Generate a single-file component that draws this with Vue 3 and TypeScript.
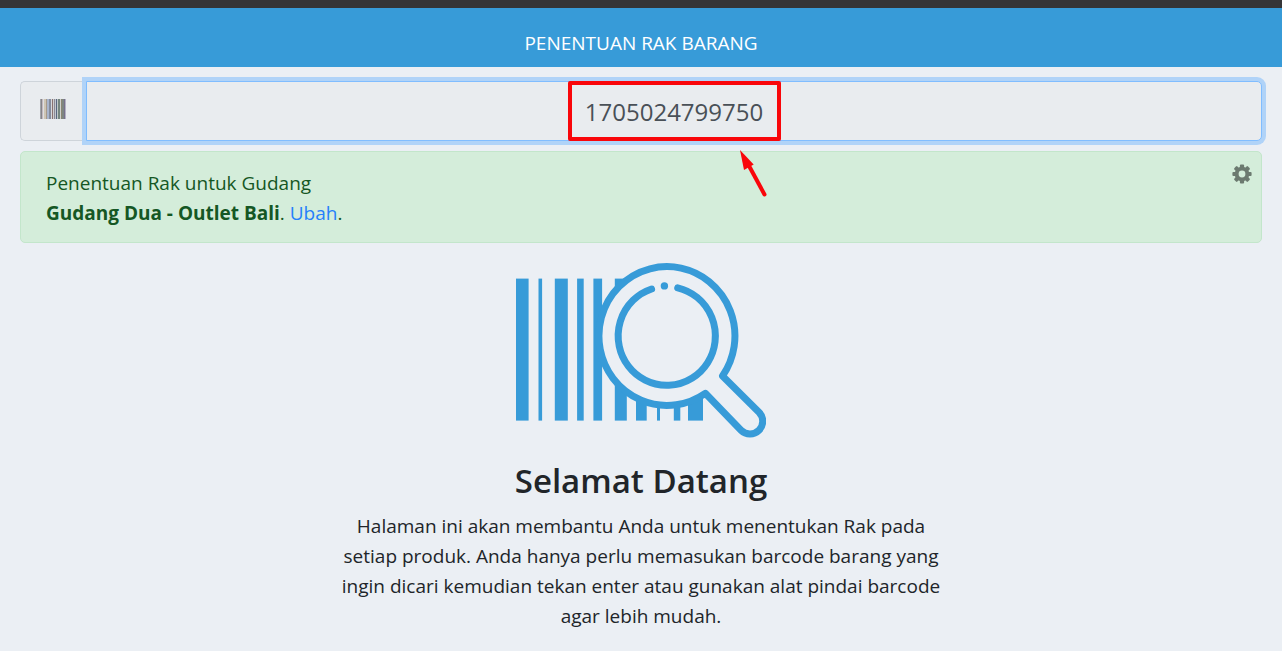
<script setup lang="ts">
import { ref } from 'vue'

const barcode = ref('1705024799750')
const warehouse = 'Gudang Dua - Outlet Bali'

interface Bar { x: number; w: number }
const bars: Bar[] = [
  { x: 0, w: 12.6 },
  { x: 22.5, w: 3.6 },
  { x: 38.8, w: 13 },
  { x: 61.1, w: 6.6 },
  { x: 77.4, w: 8.7 },
  { x: 98.8, w: 12 },
  { x: 120, w: 10.7 },
  { x: 141, w: 3 },
  { x: 157.8, w: 6.5 },
  { x: 172, w: 15 },
]

interface Stripe extends Bar { c: string }
const stripes: Stripe[] = [
  { x: 0, w: 1, c: '#a3a3a8' },
  { x: 1, w: 1, c: '#85858c' },
  { x: 2, w: 1, c: '#c4b9bd' },
  { x: 3, w: 1, c: '#dcdfe2' },
  { x: 4, w: 2, c: '#cfc5b4' },
  { x: 6, w: 1, c: '#a59a8c' },
  { x: 7, w: 2, c: '#a9b5cc' },
  { x: 9, w: 2, c: '#858c9c' },
  { x: 11, w: 1, c: '#d6d8dc' },
  { x: 12, w: 1, c: '#8a7270' },
  { x: 13, w: 1, c: '#cdd0d2' },
  { x: 14, w: 1, c: '#8d8a96' },
  { x: 15, w: 1, c: '#c3c8cf' },
  { x: 16, w: 1, c: '#59667f' },
  { x: 17, w: 1, c: '#c0c8c8' },
  { x: 18, w: 2, c: '#75867f' },
  { x: 20, w: 1, c: '#cfd2d0' },
  { x: 21, w: 1, c: '#8b8672' },
  { x: 22, w: 2, c: '#7d8682' },
  { x: 24, w: 1, c: '#77708c' },
  { x: 25, w: 1, c: '#b3b1c2' },
]
</script>

<template>
  <div class="page">
    <div class="strip"></div>
    <header class="topbar">
      <h1>PENENTUAN RAK BARANG</h1>
    </header>
    <main class="content">
      <div class="input-group">
        <label class="addon" for="barcode" aria-label="Barcode">
          <svg width="26" height="20" viewBox="0 0 26 20" shape-rendering="crispEdges" aria-hidden="true">
            <rect v-for="s in stripes" :key="s.x" :x="s.x" y="0" :width="s.w" height="20" :fill="s.c" />
          </svg>
        </label>
        <div class="field">
          <input id="barcode" v-model="barcode" type="text" autocomplete="off" />
          <div class="highlight">
            <svg class="arrow" width="32" height="50" viewBox="0 0 32 50" aria-hidden="true">
              <path d="M11 14 L27.5 44.5" stroke="#f9060a" stroke-width="4" stroke-linecap="round" />
              <path d="M3 0 L16.7 14.5 L7 20 Z" fill="#f9060a" />
            </svg>
          </div>
        </div>
      </div>

      <section class="notice">
        <p>
          Penentuan Rak untuk Gudang<br />
          <strong>{{ warehouse }}</strong>. <a href="#">Ubah</a>.
        </p>
        <button type="button" class="gear" aria-label="Pengaturan">
          <svg width="20" height="20" viewBox="0 0 20 20" aria-hidden="true">
            <g fill="#6c7a70">
              <rect v-for="a in [0, 45, 90, 135]" :key="a" x="7.9" y="0.4" width="4.2" height="19.2" rx="1" :transform="`rotate(${a} 10 10)`" />
              <circle cx="10" cy="10" r="7.3" />
            </g>
            <circle cx="10" cy="10" r="3.4" fill="#d4edda" />
          </svg>
        </button>
      </section>

      <section class="welcome">
        <svg width="250" height="175" viewBox="0 0 250 175" aria-hidden="true">
          <rect v-for="b in bars" :key="b.x" :x="b.x" y="15.6" :width="b.w" height="142" fill="#379bd8" />
          <g stroke="#379bd8" stroke-width="7" stroke-linejoin="round" stroke-linecap="round">
            <path
              fill="#ebeff4"
              d="M206.5 113 A68 69.4 0 1 0 189.3 130.3 L225 167.2 A12.7 12.7 0 0 0 243 149.2 Z"
            />
            <path fill="none" d="M135.6 26 A48.6 49.4 0 1 0 161.7 24.8" />
          </g>
          <circle cx="148.4" cy="22.9" r="3.7" fill="#379bd8" />
        </svg>
        <h2>Selamat Datang</h2>
        <p>
          Halaman ini akan membantu Anda untuk menentukan Rak pada setiap produk. Anda hanya perlu
          memasukan barcode barang yang ingin dicari kemudian tekan enter atau gunakan alat pindai
          barcode agar lebih mudah.
        </p>
      </section>
    </main>
  </div>
</template>

<style>
body {
  margin: 0;
  background: #ebeff4;
}
</style>

<style scoped>
.page {
  font-family: "Segoe UI", "Open Sans", "Noto Sans", sans-serif;
  font-size: 19px;
  line-height: 30px;
  color: #212529;
}
.page * {
  box-sizing: border-box;
}
.strip {
  height: 8px;
  background: #353537;
}
.topbar {
  padding: 20px 20px 9px;
  background: #379bd8;
  text-align: center;
}
h1 {
  margin: 0;
  font-size: 19px;
  font-weight: 400;
  color: #fff;
}
.content {
  padding: 14px 20px 0;
}
.input-group {
  display: flex;
  height: 60px;
}
.addon {
  display: flex;
  align-items: center;
  width: 66px;
  padding: 0 0 4px 19px;
  background: #e9ecef;
  border: 1px solid #ced4da;
  border-right: 0;
  border-radius: 5px 0 0 5px;
}
.field {
  position: relative;
  flex: 1;
}
input {
  display: block;
  width: 100%;
  height: 100%;
  padding: 0 16px;
  font: inherit;
  font-size: 24px;
  text-align: center;
  color: #495057;
  background: #e9ecef;
  border: 1px solid #80bdff;
  border-radius: 0 5px 5px 0;
  box-shadow: 0 0 0 4px #b0d3f8;
  outline: none;
}
.highlight {
  position: absolute;
  top: 0;
  left: 50%;
  width: 213px;
  height: 60px;
  margin-left: -106px;
  border: 4px solid #f9060a;
  border-radius: 2px;
  pointer-events: none;
}
.arrow {
  position: absolute;
  top: 65px;
  left: 165px;
}
.notice {
  display: flex;
  justify-content: space-between;
  align-items: flex-start;
  margin-top: 10px;
  padding: 12px 9px 14px 25px;
  color: #155724;
  background: #d4edda;
  border: 1px solid #c3e6cb;
  border-radius: 5px;
}
.notice p {
  margin: 4px 0 0;
}
strong {
  font-weight: 700;
}
a {
  color: #2680fb;
  text-decoration: none;
}
.gear {
  display: flex;
  padding: 0;
  background: none;
  border: 0;
  cursor: pointer;
}
.welcome {
  display: flex;
  flex-direction: column;
  align-items: center;
  margin-top: 20px;
  text-align: center;
}
h2 {
  margin: 20px 0 8px;
  font-size: 33px;
  font-weight: 600;
  line-height: 45px;
}
.welcome p {
  max-width: 620px;
  margin: 0;
}
</style>
